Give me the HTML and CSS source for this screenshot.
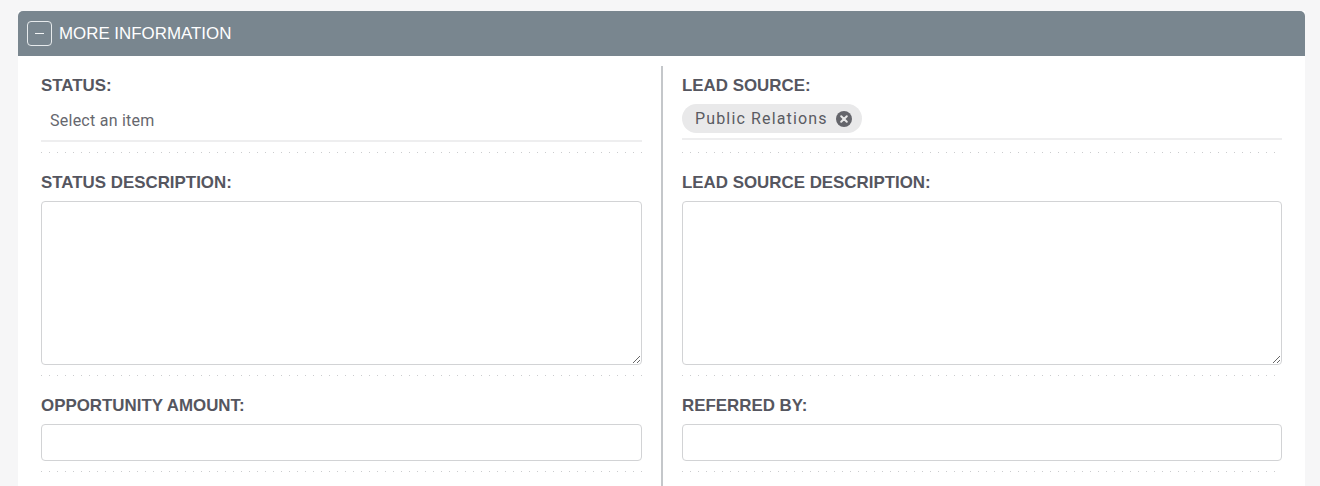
FILE: index.html
```html
<!DOCTYPE html>
<html lang="en">
<head>
  <meta charset="UTF-8">
  <meta name="viewport" content="width=device-width, initial-scale=1.0">
  <title>More Information</title>
  <link rel="stylesheet" href="styles.css">
</head>
<body>
  <section class="panel">
    <header class="panel-header">
      <button class="toggle" type="button" aria-label="Collapse"><span class="toggle-bar"></span></button>
      <span class="panel-title">MORE INFORMATION</span>
    </header>

    <div class="panel-body">
      <div class="column column-left">
        <div class="field field-select">
          <label class="field-label">STATUS:</label>
          <div class="select-box"><span class="placeholder">Select an item</span></div>
        </div>
        <div class="field field-area">
          <label class="field-label">STATUS DESCRIPTION:</label>
          <textarea class="text-area"></textarea>
        </div>
        <div class="field field-input">
          <label class="field-label">OPPORTUNITY AMOUNT:</label>
          <input class="text-input" type="text">
        </div>
      </div>

      <div class="column column-right">
        <div class="field field-select">
          <label class="field-label">LEAD SOURCE:</label>
          <div class="select-box select-box-chip">
            <span class="chip">
              Public Relations
              <svg class="chip-close" viewBox="0 0 16 16" width="16" height="16">
                <circle cx="8" cy="8" r="8" fill="#64656b"/>
                <path d="M5.2 5.2 L10.8 10.8 M10.8 5.2 L5.2 10.8" stroke="#e8e8e8" stroke-width="2" stroke-linecap="round"/>
              </svg>
            </span>
          </div>
        </div>
        <div class="field field-area">
          <label class="field-label">LEAD SOURCE DESCRIPTION:</label>
          <textarea class="text-area"></textarea>
        </div>
        <div class="field field-input">
          <label class="field-label">REFERRED BY:</label>
          <input class="text-input" type="text">
        </div>
      </div>
    </div>
  </section>
</body>
</html>
```

FILE: styles.css
```css
html, body {
  height: 100%;
}

body {
  margin: 0;
  overflow: hidden;
  background-color: #f6f6f7;
  font-family: "Liberation Sans", Arial, sans-serif;
  color: #55565f;
}

.panel {
  margin: 11px 15px 0 18px;
  background-color: #fff;
}

.panel-header {
  display: flex;
  align-items: center;
  gap: 7px;
  height: 45px;
  padding-left: 9px;
  background-color: #79868f;
  border-radius: 5px 5px 0 0;
}

.toggle {
  display: flex;
  align-items: center;
  justify-content: center;
  width: 25px;
  height: 25px;
  padding: 0;
  background: none;
  border: 1px solid #e6eaec;
  border-radius: 4px;
}

.toggle-bar {
  width: 9px;
  height: 1px;
  background-color: #f2f4f5;
}

.panel-title {
  font-size: 16.9px;
  color: #fff;
}

.panel-body {
  display: grid;
  grid-template-columns: 620px 1fr;
  padding: 10px 23px 0;
}

.column {
  padding-bottom: 40px;
}

.column-left {
  padding-right: 19px;
}

.column-right {
  padding-left: 19px;
  border-left: 2px solid #c4c7ca;
}

/* dotted rule under every field */
.field {
  background-image: linear-gradient(to right, #cbccce 1px, transparent 1px);
  background-size: 8px 1px;
  background-repeat: repeat-x;
  background-position: left bottom;
}

.field-label {
  display: block;
  font-size: 16.9px;
  font-weight: bold;
  line-height: 18px;
  color: #55565f;
}

.field-select {
  height: 87px;
  padding-top: 11px;
  box-sizing: border-box;
}

.select-box {
  height: 41px;
  margin-top: 6px;
  padding-left: 9px;
  box-sizing: border-box;
  display: flex;
  align-items: center;
  border-bottom: 2px solid #eeeeef;
}

.select-box-chip {
  height: 36px;
  margin-top: 9px;
  padding-left: 0;
  padding-bottom: 5px;
}

.placeholder {
  font-family: Roboto, sans-serif;
  font-size: 16px;
  letter-spacing: 0.25px;
  color: #66676e;
}

.chip {
  display: inline-flex;
  align-items: center;
  gap: 8px;
  height: 29px;
  padding: 0 10px 0 13px;
  background-color: #e9e9ea;
  border-radius: 15px;
  font-family: Roboto, sans-serif;
  font-size: 16px;
  letter-spacing: 1.15px;
  color: #5a5b62;
}

.field-area {
  height: 223px;
  padding-top: 21px;
  box-sizing: border-box;
}

.field-area .text-area {
  margin-top: 9px;
}

.text-area,
.text-input {
  display: block;
  width: 100%;
  box-sizing: border-box;
  margin: 0;
  background-color: #fff;
  border: 1px solid #d2d3d5;
  border-radius: 4px;
  outline: none;
}

.text-area {
  height: 164px;
  resize: vertical;
}

.field-input {
  height: 96px;
  padding-top: 21px;
  box-sizing: border-box;
}

.text-input {
  height: 37px;
  margin-top: 9px;
}
```
